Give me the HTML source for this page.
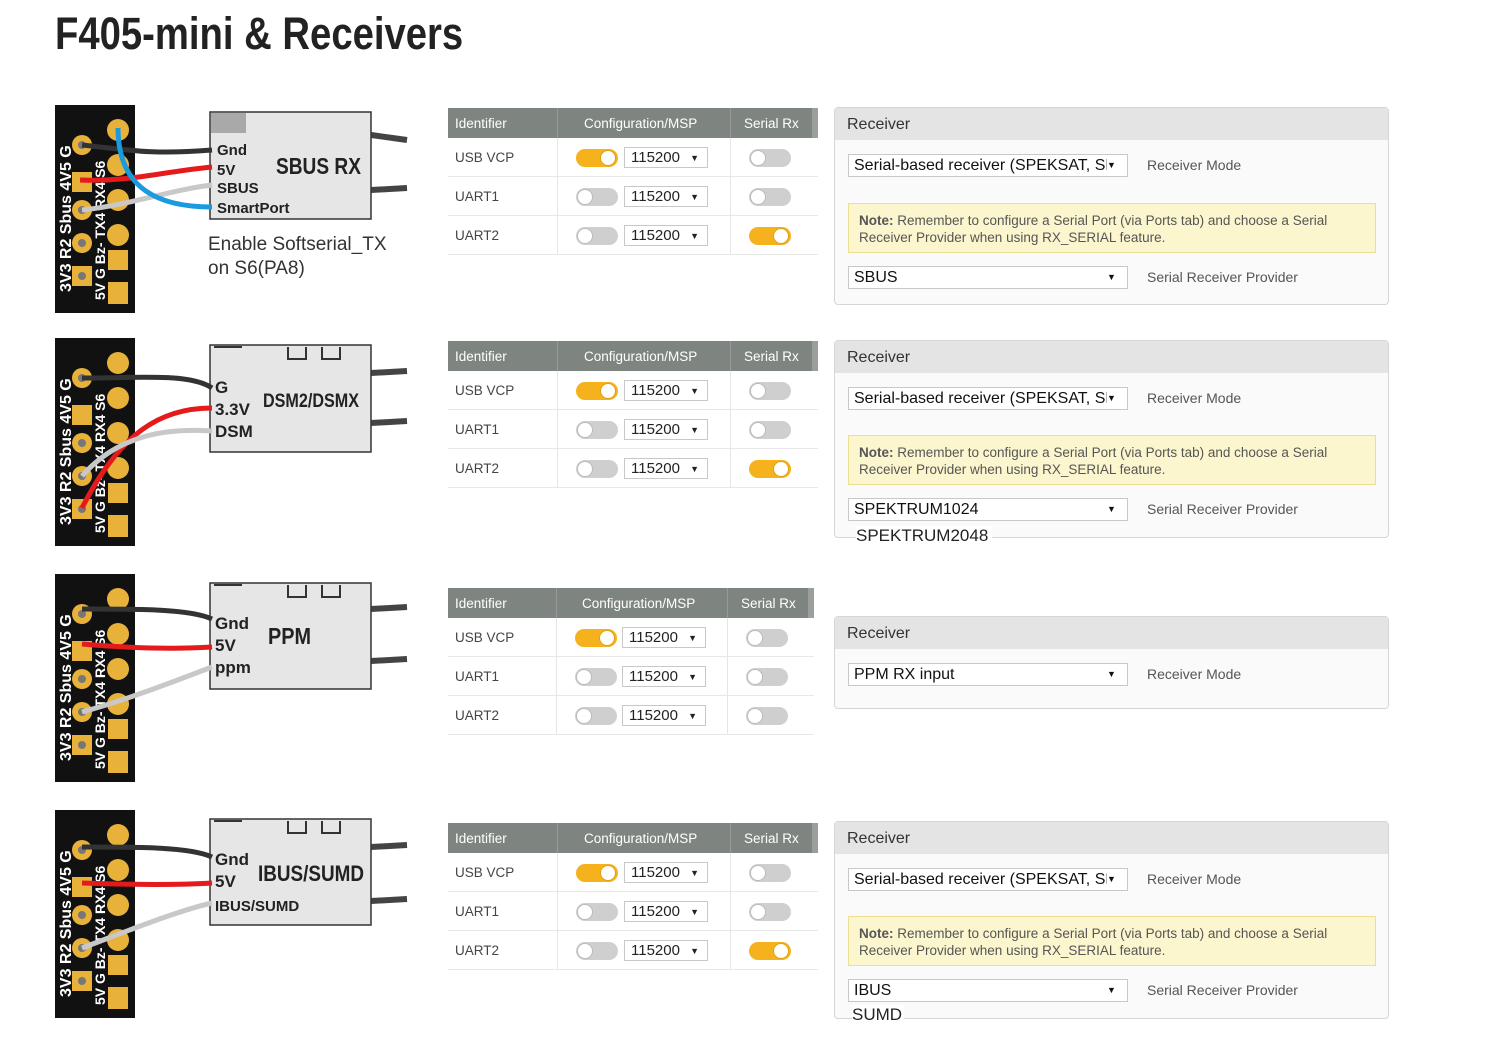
<!DOCTYPE html>
<html><head><meta charset="utf-8">
<style>
body{margin:0;width:1500px;height:1039px;background:#fff;position:relative;overflow:hidden;font-family:"Liberation Sans",sans-serif;}
.title{position:absolute;left:55px;top:8px;font-size:45px;font-weight:bold;color:#222;transform:scaleX(0.85);transform-origin:left top;white-space:nowrap;}
.tbl{position:absolute;left:448px;width:370px;font-size:13.5px;color:#444;}
.hd{height:30px;background:#7e8581;color:#fff;position:relative;border-right:6px solid #9a9f9c;}
.hd span{position:absolute;top:8px;}
.row{height:38px;border-bottom:1px solid #e8e8e8;position:relative;}
.row .id{position:absolute;left:7px;top:12px;}
.vl{position:absolute;top:0;bottom:0;width:1px;background:#e6e6e6;}
.tg{position:absolute;width:42px;height:18px;border-radius:9px;background:#cfcfcf;top:11px;}
.tg::after{content:"";position:absolute;top:1px;left:1px;width:14px;height:14px;border-radius:50%;background:#fff;border:1px solid #bbb;}
.tg.on{background:#f5b21c;}
.tg.on::after{left:24px;border-color:#e0a010;}
.sel{position:absolute;left:176px;top:9px;width:84px;height:21px;border:1px solid #c8c8c8;background:#fff;font-size:15px;color:#222;box-sizing:border-box;padding:1px 0 0 6px;}
.sel::after{content:"▼";position:absolute;right:8px;top:5px;font-size:9px;}
.rp{position:absolute;left:834px;width:555px;border:1px solid #d6d6d6;border-radius:4px;background:#fafafa;box-sizing:border-box;color:#333;}
.rh{height:32px;background:#e4e4e4;font-size:16px;padding:8px 0 0 12px;box-sizing:border-box;color:#333;}
.rs{position:absolute;left:13px;width:280px;height:23px;border:1px solid #c8c8c8;background:#fff;box-sizing:border-box;font-size:16px;padding:2px 0 0 5px;color:#111;white-space:nowrap;overflow:hidden;}
.rs::after{content:"▼";position:absolute;right:0;top:0;height:21px;width:20px;font-size:9px;background:#fff;padding-top:5px;box-sizing:border-box;}
.rl{position:absolute;left:312px;font-size:14px;color:#555;}
.note{position:absolute;left:13px;width:528px;height:50px;background:#fcf6cf;border:1px solid #eadf92;box-sizing:border-box;font-size:13.5px;color:#555;padding:8px 40px 8px 10px;line-height:17px;}
.ext{position:absolute;left:856px;font-size:17px;color:#222;}
.cap{position:absolute;left:208px;font-size:19px;color:#333;line-height:24px;}
</style></head><body>
<div class="title">F405-mini &amp; Receivers</div>

<svg width="1500" height="1039" style="position:absolute;left:0;top:0">
<defs>
<g id="pcb">
<rect x="55" y="105" width="80" height="208" fill="#111"/>
<circle cx="118" cy="130" r="11" fill="#e8b23a"/><circle cx="118" cy="165" r="11" fill="#e8b23a"/><circle cx="118" cy="200" r="11" fill="#e8b23a"/><circle cx="118" cy="235" r="11" fill="#e8b23a"/>
<rect x="108" y="250" width="20" height="20" fill="#e8b23a"/><rect x="108" y="282" width="20" height="22" fill="#e8b23a"/>
<circle cx="82" cy="145" r="10" fill="#e8b23a"/><rect x="72" y="172" width="20" height="20" fill="#e8b23a"/><circle cx="82" cy="210" r="10" fill="#e8b23a"/><circle cx="82" cy="243" r="10" fill="#e8b23a"/><rect x="72" y="266" width="20" height="20" fill="#e8b23a"/>
<circle cx="82" cy="145" r="4" fill="#777"/><circle cx="82" cy="210" r="4" fill="#777"/><circle cx="82" cy="243" r="4" fill="#777"/><circle cx="82" cy="276" r="4" fill="#777"/>
<text transform="translate(71,292) rotate(-90)" fill="#fff" font-size="16" font-weight="bold">3V3 R2 Sbus 4V5 G</text>
<text transform="translate(105,300) rotate(-90)" fill="#fff" font-size="14" font-weight="bold">5V  G  Bz- TX4 RX4 S6</text>
</g>
</defs>
<use href="#pcb"/>
<path d="M371 135 L407 140 M371 190 L407 188" stroke="#444" stroke-width="6" fill="none"/>
<rect x="210" y="112" width="161" height="107" fill="#e6e6e6" stroke="#333" stroke-width="1.5"/>
<rect x="211" y="113" width="35" height="20" fill="#a9a9a9"/>
<path d="M82 145 C130 150 150 155 212 150" stroke="#333" stroke-width="5" fill="none"/>
<path d="M80 180 C130 182 160 172 212 167" stroke="#e51b1b" stroke-width="5" fill="none"/>
<path d="M82 210 C130 205 170 190 212 185" stroke="#c8c8c8" stroke-width="5" fill="none"/>
<path d="M118 128 C118 190 160 207 212 207" stroke="#1a9be0" stroke-width="5" fill="none"/>
<text x="217" y="155" font-size="15" font-weight="bold" fill="#222">Gnd</text>
<text x="217" y="175" font-size="15" font-weight="bold" fill="#222">5V</text>
<text x="217" y="193" font-size="15" font-weight="bold" fill="#222">SBUS</text>
<text x="217" y="213" font-size="15" font-weight="bold" fill="#222">SmartPort</text>
<text x="276" y="174" font-size="23" font-weight="bold" fill="#222" textLength="85" lengthAdjust="spacingAndGlyphs">SBUS RX</text>

<g transform="translate(0,233)"><use href="#pcb"/>
<path d="M371 140 L407 138 M371 190 L407 188" stroke="#444" stroke-width="6" fill="none"/>
<rect x="210" y="112" width="161" height="107" fill="#e6e6e6" stroke="#333" stroke-width="1.5"/>
<path d="M214 114 h28 M288 114 v12 h18 v-12 M322 114 v12 h18 v-12" stroke="#333" stroke-width="2" fill="none"/>
<path d="M82 145 C140 145 190 140 212 155" stroke="#333" stroke-width="5" fill="none"/>
<path d="M82 275 C120 200 160 175 212 175" stroke="#e51b1b" stroke-width="5" fill="none"/>
<path d="M82 243 C120 200 170 195 212 198" stroke="#c8c8c8" stroke-width="5" fill="none"/>
<text x="215" y="160" font-size="17" font-weight="bold" fill="#222">G</text>
<text x="215" y="182" font-size="17" font-weight="bold" fill="#222">3.3V</text>
<text x="215" y="204" font-size="17" font-weight="bold" fill="#222">DSM</text>
<text x="263" y="174" font-size="19" font-weight="bold" fill="#222" textLength="96" lengthAdjust="spacingAndGlyphs">DSM2/DSMX</text></g>

<g transform="translate(0,469)"><use href="#pcb"/>
<path d="M371 140 L407 138 M371 192 L407 190" stroke="#444" stroke-width="6" fill="none"/>
<rect x="210" y="114" width="161" height="106" fill="#e6e6e6" stroke="#333" stroke-width="1.5"/>
<path d="M214 116 h28 M288 116 v12 h18 v-12 M322 116 v12 h18 v-12" stroke="#333" stroke-width="2" fill="none"/>
<path d="M82 140 C140 140 190 140 212 150" stroke="#333" stroke-width="5" fill="none"/>
<path d="M82 175 C140 180 180 180 212 178" stroke="#e51b1b" stroke-width="5" fill="none"/>
<path d="M82 243 C130 230 180 210 212 198" stroke="#c8c8c8" stroke-width="5" fill="none"/>
<text x="215" y="160" font-size="17" font-weight="bold" fill="#222">Gnd</text>
<text x="215" y="182" font-size="17" font-weight="bold" fill="#222">5V</text>
<text x="215" y="204" font-size="17" font-weight="bold" fill="#222">ppm</text>
<text x="268" y="175" font-size="23" font-weight="bold" fill="#222" textLength="43" lengthAdjust="spacingAndGlyphs">PPM</text></g>

<g transform="translate(0,705)"><use href="#pcb"/>
<path d="M371 142 L407 140 M371 196 L407 194" stroke="#444" stroke-width="6" fill="none"/>
<rect x="210" y="114" width="161" height="106" fill="#e6e6e6" stroke="#333" stroke-width="1.5"/>
<path d="M214 116 h28 M288 116 v12 h18 v-12 M322 116 v12 h18 v-12" stroke="#333" stroke-width="2" fill="none"/>
<path d="M82 142 C140 142 190 142 212 152" stroke="#333" stroke-width="5" fill="none"/>
<path d="M82 178 C140 180 180 180 212 178" stroke="#e51b1b" stroke-width="5" fill="none"/>
<path d="M82 243 C130 225 180 205 212 198" stroke="#c8c8c8" stroke-width="5" fill="none"/>
<text x="215" y="160" font-size="17" font-weight="bold" fill="#222">Gnd</text>
<text x="215" y="182" font-size="17" font-weight="bold" fill="#222">5V</text>
<text x="215" y="206" font-size="15" font-weight="bold" fill="#222">IBUS/SUMD</text>
<text x="258" y="176" font-size="22" font-weight="bold" fill="#222" textLength="106" lengthAdjust="spacingAndGlyphs">IBUS/SUMD</text></g>
</svg>

<div class="cap" style="top:233px">Enable Softserial_TX<br>on S6(PA8)</div>

<div class="tbl" style="top:108px">
<div class="hd"><span style="left:7px">Identifier</span><span style="left:136px">Configuration/MSP</span><span style="left:296px">Serial Rx</span><div class="vl" style="left:109px;background:#999"></div><div class="vl" style="left:282px;background:#999"></div></div>
<div class="row"><span class="id">USB VCP</span><div class="tg on" style="left:128px"></div><div class="sel">115200</div><div class="tg" style="left:301px"></div><div class="vl" style="left:109px"></div><div class="vl" style="left:282px"></div></div>
<div class="row"><span class="id">UART1</span><div class="tg" style="left:128px"></div><div class="sel">115200</div><div class="tg" style="left:301px"></div><div class="vl" style="left:109px"></div><div class="vl" style="left:282px"></div></div>
<div class="row"><span class="id">UART2</span><div class="tg" style="left:128px"></div><div class="sel">115200</div><div class="tg on" style="left:301px"></div><div class="vl" style="left:109px"></div><div class="vl" style="left:282px"></div></div>
</div>

<div class="tbl" style="top:341px">
<div class="hd"><span style="left:7px">Identifier</span><span style="left:136px">Configuration/MSP</span><span style="left:296px">Serial Rx</span><div class="vl" style="left:109px;background:#999"></div><div class="vl" style="left:282px;background:#999"></div></div>
<div class="row"><span class="id">USB VCP</span><div class="tg on" style="left:128px"></div><div class="sel">115200</div><div class="tg" style="left:301px"></div><div class="vl" style="left:109px"></div><div class="vl" style="left:282px"></div></div>
<div class="row"><span class="id">UART1</span><div class="tg" style="left:128px"></div><div class="sel">115200</div><div class="tg" style="left:301px"></div><div class="vl" style="left:109px"></div><div class="vl" style="left:282px"></div></div>
<div class="row"><span class="id">UART2</span><div class="tg" style="left:128px"></div><div class="sel">115200</div><div class="tg on" style="left:301px"></div><div class="vl" style="left:109px"></div><div class="vl" style="left:282px"></div></div>
</div>

<div class="tbl" style="top:588px;width:366px">
<div class="hd"><span style="left:7px">Identifier</span><span style="left:134px">Configuration/MSP</span><span style="left:293px">Serial Rx</span><div class="vl" style="left:108px;background:#999"></div><div class="vl" style="left:279px;background:#999"></div></div>
<div class="row"><span class="id">USB VCP</span><div class="tg on" style="left:127px"></div><div class="sel" style="left:174px">115200</div><div class="tg" style="left:298px"></div><div class="vl" style="left:108px"></div><div class="vl" style="left:279px"></div></div>
<div class="row"><span class="id">UART1</span><div class="tg" style="left:127px"></div><div class="sel" style="left:174px">115200</div><div class="tg" style="left:298px"></div><div class="vl" style="left:108px"></div><div class="vl" style="left:279px"></div></div>
<div class="row"><span class="id">UART2</span><div class="tg" style="left:127px"></div><div class="sel" style="left:174px">115200</div><div class="tg" style="left:298px"></div><div class="vl" style="left:108px"></div><div class="vl" style="left:279px"></div></div>
</div>

<div class="tbl" style="top:823px">
<div class="hd"><span style="left:7px">Identifier</span><span style="left:136px">Configuration/MSP</span><span style="left:296px">Serial Rx</span><div class="vl" style="left:109px;background:#999"></div><div class="vl" style="left:282px;background:#999"></div></div>
<div class="row"><span class="id">USB VCP</span><div class="tg on" style="left:128px"></div><div class="sel">115200</div><div class="tg" style="left:301px"></div><div class="vl" style="left:109px"></div><div class="vl" style="left:282px"></div></div>
<div class="row"><span class="id">UART1</span><div class="tg" style="left:128px"></div><div class="sel">115200</div><div class="tg" style="left:301px"></div><div class="vl" style="left:109px"></div><div class="vl" style="left:282px"></div></div>
<div class="row"><span class="id">UART2</span><div class="tg" style="left:128px"></div><div class="sel">115200</div><div class="tg on" style="left:301px"></div><div class="vl" style="left:109px"></div><div class="vl" style="left:282px"></div></div>
</div>

<div class="rp" style="top:107px;height:198px">
<div class="rh">Receiver</div>
<div class="rs" style="top:46px">Serial-based receiver (SPEKSAT, SRXL)</div><div class="rl" style="top:49px">Receiver Mode</div>
<div class="note" style="top:95px"><b>Note:</b> Remember to configure a Serial Port (via Ports tab) and choose a Serial Receiver Provider when using RX_SERIAL feature.</div>
<div class="rs" style="top:158px">SBUS</div><div class="rl" style="top:161px">Serial Receiver Provider</div>
</div>

<div class="rp" style="top:340px;height:198px">
<div class="rh">Receiver</div>
<div class="rs" style="top:46px">Serial-based receiver (SPEKSAT, SRXL)</div><div class="rl" style="top:49px">Receiver Mode</div>
<div class="note" style="top:94px"><b>Note:</b> Remember to configure a Serial Port (via Ports tab) and choose a Serial Receiver Provider when using RX_SERIAL feature.</div>
<div class="rs" style="top:157px">SPEKTRUM1024</div><div class="rl" style="top:160px">Serial Receiver Provider</div>
</div>
<div class="ext" style="top:526px;background:#fff;padding-right:4px">SPEKTRUM2048</div>

<div class="rp" style="top:616px;height:93px">
<div class="rh">Receiver</div>
<div class="rs" style="top:46px">PPM RX input</div><div class="rl" style="top:49px">Receiver Mode</div>
</div>

<div class="rp" style="top:821px;height:198px">
<div class="rh">Receiver</div>
<div class="rs" style="top:46px">Serial-based receiver (SPEKSAT, SRXL)</div><div class="rl" style="top:49px">Receiver Mode</div>
<div class="note" style="top:94px"><b>Note:</b> Remember to configure a Serial Port (via Ports tab) and choose a Serial Receiver Provider when using RX_SERIAL feature.</div>
<div class="rs" style="top:157px">IBUS</div><div class="rl" style="top:160px">Serial Receiver Provider</div>
</div>
<div class="ext" style="top:1005px;left:852px;background:#fff;padding-right:2px">SUMD</div>
</body></html>
